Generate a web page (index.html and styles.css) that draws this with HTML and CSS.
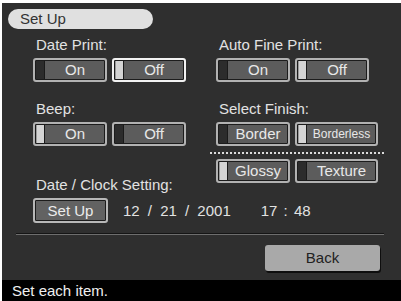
FILE: index.html
```html
<!DOCTYPE html>
<html lang="en">
<head>
  <meta charset="UTF-8" />
  <title>Set Up</title>
  <link rel="stylesheet" href="styles.css">
</head>
<body>

  <div class="device">
    <div class="screen">
      <div class="title">Set Up</div>

      <div class="cols">
        <!-- left column -->
        <div class="col col-left">
          <div class="group">
            <div class="label">Date Print:</div>
            <div class="pair">
              <div class="btn"><span class="ind"></span><span class="txt">On</span></div>
              <div class="btn sel focus"><span class="ind"></span><span class="txt">Off</span></div>
            </div>
          </div>

          <div class="group next">
            <div class="label">Beep:</div>
            <div class="pair">
              <div class="btn sel"><span class="ind"></span><span class="txt">On</span></div>
              <div class="btn"><span class="ind"></span><span class="txt">Off</span></div>
            </div>
          </div>

          <div class="group clock">
            <div class="label">Date / Clock Setting:</div>
            <div class="date-row">
              <div class="plain-btn">Set Up</div>
              <span class="date">12 / 21 / 2001</span>
              <span class="time">17 : 48</span>
            </div>
          </div>
        </div>

        <!-- right column -->
        <div class="col col-right">
          <div class="group">
            <div class="label">Auto Fine Print:</div>
            <div class="pair">
              <div class="btn"><span class="ind"></span><span class="txt">On</span></div>
              <div class="btn sel"><span class="ind"></span><span class="txt">Off</span></div>
            </div>
          </div>

          <div class="group next">
            <div class="label">Select Finish:</div>
            <div class="pair">
              <div class="btn"><span class="ind"></span><span class="txt">Border</span></div>
              <div class="btn wide sel"><span class="ind"></span><span class="txt small">Borderless</span></div>
            </div>
            <div class="dots"></div>
            <div class="pair paper">
              <div class="btn sel"><span class="ind"></span><span class="txt">Glossy</span></div>
              <div class="btn wide"><span class="ind"></span><span class="txt">Texture</span></div>
            </div>
          </div>
        </div>
      </div>

      <div class="rule"></div>
      <div class="back">Back</div>
    </div>
    <div class="status">Set each item.</div>
  </div>

</body>
</html>
```

FILE: styles.css
```css
/* Basic page styling */
* {
  box-sizing: border-box;
  margin: 0;
  padding: 0;
}
body {
  background: #fff;
  font-family: "Liberation Sans", Arial, sans-serif;
  color: #e2e2e2;
}
.device {
  width: 401px;
  height: 301px;
  padding: 3px 0 0 2px;
  display: flex;
  flex-direction: column;
}
.screen {
  height: 277px;
  background: #2f2f2f;
}

/* title pill */
.title {
  width: 145px;
  height: 20px;
  margin: 6px 0 0 6px;
  padding-left: 12px;
  border-radius: 10px;
  background: #e0e0e0;
  color: #333;
  font-size: 15px;
  line-height: 20px;
}

/* two columns of settings */
.cols {
  display: flex;
  margin: 8px 0 0 31px;
}
.col-left {
  width: 183px;
  flex-shrink: 0;
}
.group.next {
  margin-top: 19px;
}
.group.clock {
  margin-top: 31px;
}
.label {
  height: 15px;
  padding-left: 3px;
  margin-bottom: 6px;
  font-size: 15px;
  line-height: 15px;
  white-space: nowrap;
}
.pair {
  display: flex;
  gap: 5px;
}
.pair.paper {
  margin-top: 5px;
}

/* toggle buttons */
.btn {
  width: 74px;
  height: 24px;
  flex-shrink: 0;
  display: flex;
  border: 2px solid #b2b2b2;
  border-radius: 3px;
  background: #5c5c5c;
  box-shadow: inset 0 0 0 1px #1c1c1c;
}
.btn.wide {
  width: 83px;
}
.btn.focus {
  border-color: #f2f2f2;
}
.ind {
  width: 9px;
  margin: 1px 0 1px 1px;
  background: #2c2c2c;
  border-right: 1px solid #1a1a1a;
}
.btn.sel .ind {
  background: #d4d4d4;
  border-left: 1px solid #9a9a9a;
}
.txt {
  flex: 1;
  text-align: center;
  font-size: 15px;
  line-height: 20px;
  color: #e8e8e8;
  white-space: nowrap;
}
.txt.small {
  font-size: 12px;
}

.dots {
  width: 175px;
  height: 2px;
  margin: 6px 0 0 -6px;
  background-image: repeating-linear-gradient(to right, #dcdcdc 0 2px, transparent 2px 4px);
}

/* date / clock row */
.date-row {
  display: flex;
  align-items: center;
  white-space: nowrap;
  font-size: 15px;
}
.plain-btn {
  width: 75px;
  height: 25px;
  flex-shrink: 0;
  border: 2px solid #b8b8b8;
  border-radius: 3px;
  background: #626262;
  box-shadow: inset 0 0 0 1px #1c1c1c;
  text-align: center;
  line-height: 21px;
  color: #ececec;
}
.date {
  margin-left: 15px;
  word-spacing: 4px;
}
.time {
  margin-left: 30px;
  word-spacing: 2px;
}

/* footer */
.rule {
  width: 368px;
  height: 2px;
  margin: 10px 0 0 14px;
  border-top: 1px solid #151515;
  border-bottom: 1px solid #6e6e6e;
}
.back {
  width: 115px;
  height: 26px;
  margin: 10px 0 0 263px;
  border-radius: 3px;
  background: #a9a9a9;
  box-shadow: 1px 2px 0 #0e0e0e;
  color: #222;
  font-size: 15px;
  line-height: 26px;
  text-align: center;
}

.status {
  height: 21px;
  padding-left: 10px;
  background: #000;
  color: #f0f0f0;
  font-size: 15px;
  line-height: 21px;
}
```
